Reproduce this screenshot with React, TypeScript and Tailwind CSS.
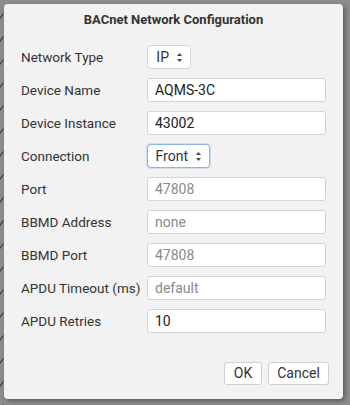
const FONT = { fontFamily: "Roboto, 'Liberation Sans', sans-serif" }

type Field = {
  label: string
  kind: "select" | "input"
  value?: string
  placeholder?: string
  width?: string
  focused?: boolean
}

const FIELDS: Field[] = [
  { label: "Network Type", kind: "select", value: "IP", width: "w-[44px]" },
  { label: "Device Name", kind: "input", value: "AQMS-3C" },
  { label: "Device Instance", kind: "input", value: "43002" },
  { label: "Connection", kind: "select", value: "Front", width: "w-[63px]", focused: true },
  { label: "Port", kind: "input", placeholder: "47808" },
  { label: "BBMD Address", kind: "input", placeholder: "none" },
  { label: "BBMD Port", kind: "input", placeholder: "47808" },
  { label: "APDU Timeout (ms)", kind: "input", placeholder: "default" },
  { label: "APDU Retries", kind: "input", value: "10" },
]

function Spinner() {
  return (
    <svg width="7" height="11" viewBox="0 0 7 11" className="shrink-0">
      <path d="M3.5 1 L6 4 L1 4 Z" fill="#444" />
      <path d="M3.5 10 L6 7 L1 7 Z" fill="#444" />
    </svg>
  )
}

// check marks of the list that peeks out behind the dialog
function Tick() {
  return (
    <svg width="8" height="8" viewBox="0 0 8 8">
      <path d="M0.5 4.5 L2.5 7 L7.5 0.5" stroke="#333" strokeWidth="1.1" fill="none" />
    </svg>
  )
}

function SelectBox({ field }: { field: Field }) {
  return (
    <div
      className={`h-[24px] ${field.width} flex items-center justify-end gap-[7px] pr-[7px] rounded-[4px] bg-white border ${
        field.focused ? "border-[#8fb4e0] shadow-[0_0_0_1px_rgba(143,180,224,0.35)]" : "border-[#d4d4d4]"
      }`}
    >
      <span className="text-[14px] text-[#333]">{field.value}</span>
      <Spinner />
    </div>
  )
}

function InputBox({ field }: { field: Field }) {
  return (
    <div className="h-[24px] w-[179px] flex items-center px-[7px] rounded-[3px] bg-white border border-[#d4d4d4]">
      {field.value ? (
        <span className="text-[14px] text-[#222]">{field.value}</span>
      ) : (
        <span className="text-[14px] text-[#8a8a8a]">{field.placeholder}</span>
      )}
    </div>
  )
}

export default function App() {
  const ticks = Array.from({ length: 18 })
  return (
    <div className="relative w-[350px] h-[405px] overflow-hidden bg-[#8c8c8c]" style={FONT}>
      <div className="absolute left-[-4px] top-[13px] flex flex-col gap-[15px]">
        {ticks.map((_, i) => (
          <Tick key={i} />
        ))}
      </div>
      <div className="absolute left-[4px] top-[4px] w-[339px] h-[395px] rounded-[4px] bg-[#f2f2f2] shadow-[2px_2px_4px_rgba(0,0,0,0.35)] flex flex-col">
        <div className="h-[30px] flex items-end justify-center pb-[5px]">
          <span className="text-[13px] font-bold text-[#333]">BACnet Network Configuration</span>
        </div>
        <div className="flex flex-col gap-[9px] mt-[11px] pl-[17px]">
          {FIELDS.map((f) => (
            <div key={f.label} className="flex items-center h-[24px]">
              <span className="w-[126px] whitespace-nowrap text-[13.5px] text-[#333]">{f.label}</span>
              {f.kind === "select" ? <SelectBox field={f} /> : <InputBox field={f} />}
            </div>
          ))}
        </div>
        <div className="mt-auto mb-[14px] flex justify-end gap-[6px] pr-[14px]">
          <button className="h-[23px] w-[38px] rounded-[3px] bg-white border border-[#d0d0d0] text-[14px] text-[#333]">
            OK
          </button>
          <button className="h-[23px] w-[61px] rounded-[3px] bg-white border border-[#d0d0d0] text-[14px] text-[#333]">
            Cancel
          </button>
        </div>
      </div>
    </div>
  )
}
